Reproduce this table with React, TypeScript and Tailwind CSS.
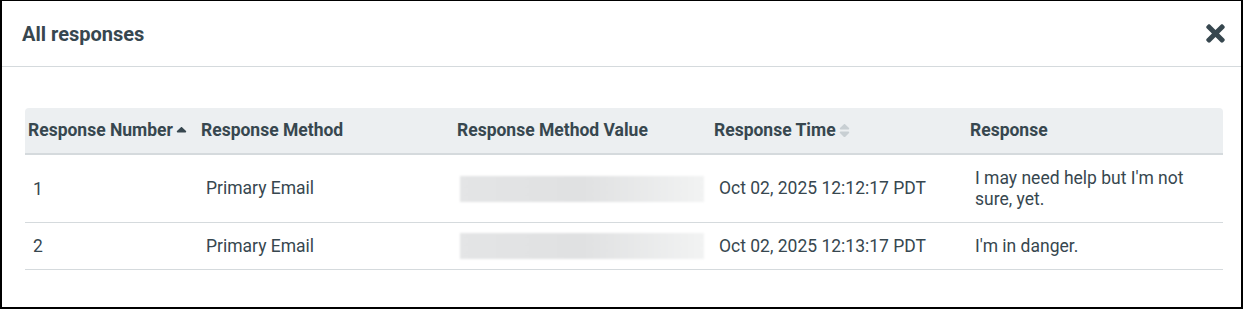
import { FaTimes, FaSortUp, FaSort } from 'react-icons/fa';

export default function App() {
  const rows = [
    { num: '1', method: 'Primary Email', time: 'Oct 02, 2025 12:12:17 PDT', response: "I may need help but I'm not sure, yet." },
    { num: '2', method: 'Primary Email', time: 'Oct 02, 2025 12:13:17 PDT', response: "I'm in danger." },
  ];

  return (
    <div className="w-[1243px] h-[309px] bg-white border-t border-l-2 border-r-2 border-b-2 border-black font-['Roboto',sans-serif] text-[#37474f]">
      {/* Header */}
      <div className="flex items-center justify-between h-[66px] pl-[20px] pr-[12px] border-b border-[#d5dadd]">
        <h1 className="text-[20px] font-bold mt-[1px]">All responses</h1>
        <button className="text-[#37474f]">
          <FaTimes className="w-[27px] h-[27px]" />
        </button>
      </div>

      <div className="pt-[41px] pl-[23px]">
        <table className="w-[1198px] table-fixed border-collapse text-[17.5px]">
          <colgroup>
            <col className="w-[173px]" />
            <col className="w-[256px]" />
            <col className="w-[257px]" />
            <col className="w-[256px]" />
            <col className="w-[256px]" />
          </colgroup>
          <thead>
            <tr className="bg-[#eceff1] h-[46px] border-b-2 border-[#d5dadd] text-left font-bold">
              <th className="pl-[3px] rounded-tl-[4px]">
                <span className="inline-flex items-center">
                  Response Number
                  <FaSortUp className="w-[17px] h-[17px] mt-[6px]" />
                </span>
              </th>
              <th className="pl-[3px]">Response Method</th>
              <th className="pl-[3px]">Response Method Value</th>
              <th className="pl-[3px]">
                <span className="inline-flex items-center">
                  Response Time
                  <FaSort className="w-[17px] h-[17px] text-[#c8cfd3]" />
                </span>
              </th>
              <th className="pl-[3px] rounded-tr-[4px]">Response</th>
            </tr>
          </thead>
          <tbody className="text-[#37474f]">
            {rows.map((r) => (
              <tr key={r.num} className="border-b border-[#d5dadd] leading-[21px]">
                <td className="pl-[8px] pr-[8px] pt-[13px] pb-[12px]">{r.num}</td>
                <td className="pl-[8px] pr-[8px]">{r.method}</td>
                <td className="pl-[6px] pr-[8px]">
                  <div className="w-[244px] h-[26px] bg-gradient-to-r from-[#e4e5e6] via-[#e0e1e2] to-[#f2f3f3] blur-[1px]" />
                </td>
                <td className="pl-[8px] pr-[8px]">{r.time}</td>
                <td className="pl-[8px] pr-[24px] pt-[13px] pb-[12px]">{r.response}</td>
              </tr>
            ))}
          </tbody>
        </table>
      </div>
    </div>
  );
}
